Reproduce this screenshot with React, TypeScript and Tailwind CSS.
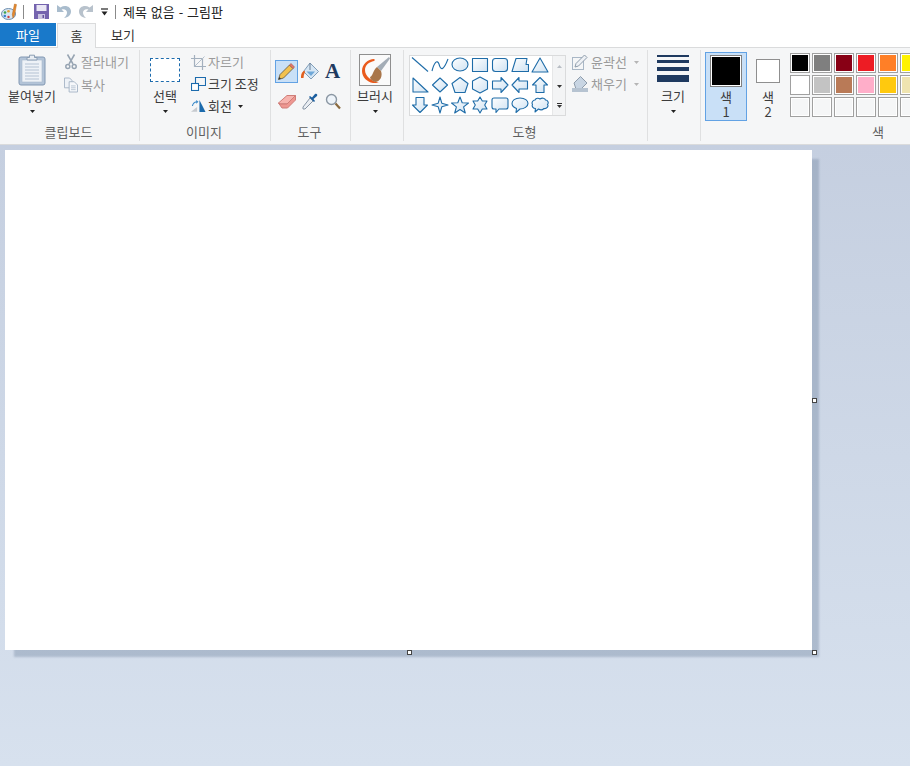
import type { ReactNode } from "react";

const FONT = "font-['Noto_Sans_CJK_KR','Noto_Sans',sans-serif]";

function Caret({ color = "#222" }: { color?: string }) {
    return (
        <svg width="5" height="3" viewBox="0 0 5 3">
            <path d="M0 0H5L2.500 3Z" fill={color} />
        </svg>
    );
}

function PaintLogo() {
    return (
        <svg width="17" height="18" viewBox="0 0 17 18">
            <ellipse cx="7.500" cy="11" rx="7" ry="5.500" fill="#d8e6f2" stroke="#6f8fb0" />
            <circle cx="4" cy="9.500" r="1.300" fill="#3fa34d" />
            <circle cx="7.500" cy="8.200" r="1.300" fill="#e0a030" />
            <circle cx="3.800" cy="13" r="1.300" fill="#3a7fd0" />
            <circle cx="7.500" cy="14" r="1.200" fill="#d04040" />
            <path d="M13.500 1L15.500 1.600L13.500 12L12 15L11.300 11.500Z" fill="#e58a2e" stroke="#b4641c" strokeWidth=".5" />
        </svg>
    );
}

function SaveIcon() {
    return (
        <svg width="15" height="15" viewBox="0 0 15 15">
            <path d="M0 0H15V15H0Z" fill="#7463ae" />
            <path d="M2.500 1H12.500V7H2.500Z" fill="#e9e6f4" />
            <path d="M4 10H11V15H4Z" fill="#c9c3e0" />
            <path d="M8.500 11H10V14H8.500Z" fill="#6553a0" />
        </svg>
    );
}

function UndoIcon({ flip = false }: { flip?: boolean }) {
    return (
        <svg width="14" height="15" viewBox="0 0 14 15" className={flip ? "-scale-x-100" : ""}>
            <path d="M0 1V8H7L4.600 5.600C7 4.400 10 5.600 10 8.600C10 10.600 9 12.400 7 14C11 13.500 14 11 14 7.500C14 2.800 8.500 0.400 3.400 3.400L0 1Z" fill={flip ? "#b8c2cc" : "#a9bccd"} />
        </svg>
    );
}

function QuickMenu() {
    return (
        <svg width="7" height="8" viewBox="0 0 7 8">
            <path d="M0 1H7" stroke="#222" strokeWidth="1.200" />
            <path d="M0.500 3.500H6.500L3.500 7.500Z" fill="#222" />
        </svg>
    );
}

function PasteIcon() {
    return (
        <svg width="28" height="32" viewBox="0 0 28 32">
            <rect x="1" y="3" width="26" height="28" rx="2" fill="#b3c4d8" stroke="#8298b3" />
            <rect x="4" y="6" width="20" height="22" fill="#eef2f7" stroke="#a9b9cc" strokeWidth=".6" />
            <path d="M7 10H21M7 13H21M7 16H21M7 19H21M7 22H21M7 25H21" stroke="#b4c2d3" />
            <path d="M9 6V3.500H11.500V1.200H16.500V3.500H19V6Z" fill="#e8edf3" stroke="#8a9db3" />
        </svg>
    );
}

function CutIcon() {
    return (
        <svg width="12" height="16" viewBox="0 0 12 16" fill="none" stroke="#97a4b2" strokeWidth="1.500">
            <path d="M2.500 0.500L8 10M9.500 0.500L4 10" />
            <circle cx="2.800" cy="12.600" r="2" />
            <circle cx="9.200" cy="12.600" r="2" />
        </svg>
    );
}

function CopyIcon() {
    return (
        <svg width="15" height="16" viewBox="0 0 15 16">
            <path d="M0.500 0.500H6L8.500 3V11H0.500Z" fill="#eef2f7" stroke="#a5b4c5" />
            <path d="M5.500 4.500H11L14.500 8V15.500H5.500Z" fill="#f6f8fb" stroke="#a5b4c5" />
            <path d="M7.500 9H12.500M7.500 11H12.500M7.500 13H12.500" stroke="#b8c4d2" />
        </svg>
    );
}

function CropIcon() {
    return (
        <svg width="15" height="15" viewBox="0 0 15 15" fill="none">
            <path d="M3.500 0V11.500H15M0 3.500H11.500V15" stroke="#a3b0be" strokeWidth="1.200" />
            <path d="M3.500 11.500L13.500 1.500" stroke="#b4bfcb" />
        </svg>
    );
}

function ResizeIcon() {
    return (
        <svg width="15" height="14" viewBox="0 0 15 14" fill="none" stroke="#1c6bad" strokeWidth="1.100">
            <rect x="0.500" y="6.500" width="7" height="7" fill="#fff" />
            <path d="M4.500 6.500V0.500H14.500V8.500H7.500" />
        </svg>
    );
}

function RotateIcon() {
    return (
        <svg width="16" height="14" viewBox="0 0 16 14">
            <path d="M0 13L6.500 8V13Z" fill="#c6cacf" />
            <path d="M9 0.500L15.500 13.500H9Z" fill="#1c6bad" />
            <path d="M1.500 7C2 4.500 3.500 3 6 2.500" stroke="#3b8ac8" strokeWidth="1.200" fill="none" />
            <path d="M5.500 0.500L8 2.500L5.500 4.500Z" fill="#3b8ac8" />
        </svg>
    );
}

function PencilIcon() {
    return (
        <svg width="17" height="17" viewBox="0 0 17 17">
            <path d="M0.500 16.500L2 11.500L11.500 2L15 5.500L5.500 15Z" fill="#f2c14e" stroke="#5b5340" strokeWidth=".8" />
            <path d="M0.500 16.500L1.200 14L3 15.800Z" fill="#333" />
            <path d="M11.500 2L13 0.500L16.500 4L15 5.500Z" fill="#e8786b" stroke="#a04a42" strokeWidth=".6" />
        </svg>
    );
}

function FillIcon() {
    return (
        <svg width="18" height="19" viewBox="0 0 18 19">
            <path d="M9 1L17.500 9.500L10 17L2.500 9.500Z" fill="#d6e6f4" stroke="#7f9db8" />
            <path d="M5.500 9.500H14L10 14Z" fill="#6fa8d8" />
            <path d="M9 1V8" stroke="#6b7f94" />
            <path d="M0 16C-0.200 12 1 10 3.500 8.500L4 10C3 12 2.500 14 2.500 16Z" fill="#e2601f" />
        </svg>
    );
}

function EraserIcon() {
    return (
        <svg width="18" height="14" viewBox="0 0 18 14">
            <path d="M0.500 8L9 0.500H17.500L9 9H2Z" fill="#f6b3ae" stroke="#cf7d78" />
            <path d="M0.500 8L4 13H9.500L17.500 5V0.500L9 9H2Z" fill="#ee9791" stroke="#cf7d78" />
        </svg>
    );
}

function PickerIcon() {
    return (
        <svg width="16" height="17" viewBox="0 0 16 17">
            <path d="M8 5L11 8L3 16H1V14Z" fill="#e9edf2" stroke="#8795a5" />
            <path d="M7 4L12 9L13 8L11.500 6L15 3C16 1.500 14.500 0 13 1L10 4.500L8 3Z" fill="#1c5f9f" />
        </svg>
    );
}

function MagnifierIcon() {
    return (
        <svg width="16" height="17" viewBox="0 0 16 17" fill="none">
            <circle cx="6.500" cy="6.500" r="5" fill="#eef4fa" stroke="#8b97a3" strokeWidth="1.400" />
            <path d="M10.500 10.500L15 15.500" stroke="#8a6a3f" strokeWidth="2.200" />
        </svg>
    );
}

function BrushIcon() {
    return (
        <svg width="32" height="32" viewBox="0 0 32 32">
            <rect x="0.500" y="0.500" width="31" height="31" fill="#fafafa" stroke="#8f8f8f" />
            <path d="M15 5C9 5 3 10 3 17C3 23 8 28 14 29L20 29C12 27 6 22 6 16C6 11 10 8 15 7C16 6.500 16 5.500 15 5Z" fill="#ea5a1c" />
            <path d="M30 3L31 4.500L22 17L18 13Z" fill="#a4adb6" />
            <path d="M18 13L22 17C24 22 21 28 16 28C13 27 11 25 11 23C14 22 14 16 18 13Z" fill="#a9764a" />
        </svg>
    );
}

const SHAPES: ReactNode[] = [
    <path d="M1 1.500L17 15.500" />,
    <path d="M1 15C3 7 6 3 8 8C9.500 14 12 16 17 3" fill="none" />,
    <ellipse cx="9" cy="8.500" rx="8" ry="6.500" />,
    <rect x="1.500" y="2.500" width="15" height="13" />,
    <rect x="1.500" y="2.500" width="15" height="13" rx="3" />,
    <path d="M5 2.500H16L15 8.500H17.500V15.500H1Z" />,
    <path d="M9 2L17 16H1Z" />,
    <path d="M2 2L17 16H2Z" />,
    <path d="M9 2L16.500 9L9 16L1.500 9Z" />,
    <path d="M9 1.500L17 7.500L14 16.500H4L1 7.500Z" />,
    <path d="M9 1L16.500 5V13L9 17L1.500 13V5Z" />,
    <path d="M1.500 5H10V1.500L17 9L10 16.500V13H1.500Z" />,
    <path d="M16.500 5H8V1.500L1 9L8 16.500V13H16.500Z" />,
    <path d="M9 1.500L16.500 9H13V16.500H5V9H1.500Z" />,
    <path d="M5 1.500H13V9H16.500L9 16.500L1.500 9H5Z" />,
    <path d="M9 1L10.800 7.200L17 9L10.800 10.800L9 17L7.200 10.800L1 9L7.200 7.200Z" />,
    <path d="M9 1L11.200 6.800L17.500 7L12.600 10.900L14.300 17L9 13.500L3.700 17L5.400 10.900L0.500 7L6.800 6.800Z" />,
    <path d="M9 1L11.300 5H16L13.700 9L16 13H11.300L9 17L6.700 13H2L4.300 9L2 5H6.700Z" />,
    <path d="M3 2H15Q17 2 17 4V11Q17 13 15 13H8L5 16.500V13H3Q1 13 1 11V4Q1 2 3 2Z" />,
    <path d="M9 2C14 2 17 4.500 17 7.500C17 10.500 13 13 9 13L5 16.500L5.500 12.500C3 11.500 1 10 1 7.500C1 4.500 4 2 9 2Z" />,
    <path d="M4 4C5 1.500 8 2 9 3C11 1.500 14 2 14.500 4C17 4 18 7 16.500 8.500C18 10.500 15.500 13 13 12.500C11.500 14 9 14 7.500 13L4 16L4.500 12.500C2 12.500 0.500 10 1.500 8.500C0.200 6.500 2 4 4 4Z" />,
];

function ShapeGallery() {
    return (
        <div className="w-[157px] h-[61px] border border-[#dadbdc] flex bg-white">
            <div className="w-[142px] grid grid-cols-[repeat(7,20px)] content-start">
                {SHAPES.map((shape, i) => (
                    <div key={i} className="w-[20px] h-[20px] flex justify-center items-start">
                        <svg width="18" height="18" viewBox="0 0 18 18" fill={`url(#shapeFill${i})`} stroke="#1e6ca8" strokeWidth="1.100" strokeLinejoin="round">
                            <defs>
                                <linearGradient id={`shapeFill${i}`} x1="0" y1="0" x2="1" y2="1">
                                    <stop offset="0" stopColor="#ffffff" />
                                    <stop offset="1" stopColor="#cfe2f2" />
                                </linearGradient>
                            </defs>
                            {shape}
                        </svg>
                    </div>
                ))}
            </div>
            <div className="flex-1 flex flex-col items-center bg-[#f3f4f5] border-l border-[#e6e7e8]">
                <div className="h-[20px] flex items-center">
                    <svg width="5" height="3" viewBox="0 0 5 3"><path d="M0 3H5L2.500 0Z" fill="#b8bdc4" /></svg>
                </div>
                <div className="h-[20px] flex items-center">
                    <Caret color="#333" />
                </div>
                <div className="h-[19px] flex flex-col items-center justify-center gap-[1px]">
                    <div className="w-[5px] h-[1px] bg-[#333]" />
                    <Caret color="#333" />
                </div>
            </div>
        </div>
    );
}

function OutlineIcon() {
    return (
        <svg width="16" height="16" viewBox="0 0 16 16" fill="none">
            <rect x="0.500" y="3.500" width="11" height="12" stroke="#a9b7c6" />
            <path d="M3 13L4 9.500L12.500 1L15 3.500L6.500 12Z" fill="#eef1f5" stroke="#8e9cab" />
        </svg>
    );
}

function FillShapeIcon() {
    return (
        <svg width="16" height="16" viewBox="0 0 16 16">
            <path d="M8.500 0.500L15 7L9 13H4L2 7Z" fill="#c8d5e3" stroke="#8e9cab" />
            <path d="M0 12H16V16H0Z" fill="#b6c3d1" />
        </svg>
    );
}

function LargeButton({ icon, label, width = "w-[48px]" }: { icon: ReactNode; label: string; width?: string }) {
    return (
        <div className={`${width} flex flex-col items-center text-[#3c3c3c]`}>
            <div className="h-[38px] flex items-center justify-center pt-[1px]">{icon}</div>
            <div className="h-[15px] leading-[15px] whitespace-nowrap">{label}</div>
            <div className="h-[17px] flex items-center">
                <Caret />
            </div>
        </div>
    );
}

function SmallButton({ icon, label, disabled = false, caret = false, gap = "gap-[2px]", iconWidth = "w-[15px]" }: {
    icon: ReactNode;
    label: string;
    disabled?: boolean;
    caret?: boolean;
    gap?: string;
    iconWidth?: string;
}) {
    return (
        <div className={`h-[22px] flex items-center ${gap} whitespace-nowrap ${disabled ? "text-[#9b9b9b]" : "text-[#3c3c3c]"}`}>
            <div className={`${iconWidth} flex justify-center`}>{icon}</div>
            <span>{label}</span>
            {caret && (
                <span className="ml-[4px] flex items-center">
                    <Caret color={disabled ? "#b5b5b5" : "#222"} />
                </span>
            )}
        </div>
    );
}

function Group({ width, label, divider = true, children }: { width: string; label: string; divider?: boolean; children: ReactNode }) {
    return (
        <div className={`${width} shrink-0 h-[91px] mt-[2px] flex flex-col ${divider ? "border-r border-[#dfe0e1]" : ""}`}>
            <div className="h-[73px] flex">{children}</div>
            <div className="h-[18px] leading-[18px] text-center text-[#5f5f5f] pr-[2px]">{label}</div>
        </div>
    );
}

const SWATCHES = [
    ["#000000", "#7f7f7f", "#880015", "#ed1c24", "#ff7f27", "#fff200"],
    ["#ffffff", "#c3c3c3", "#b97a57", "#ffaec9", "#ffc90e", "#efe4b0"],
    ["#f5f6f7", "#f5f6f7", "#f5f6f7", "#f5f6f7", "#f5f6f7", "#f5f6f7"],
];

function Palette() {
    return (
        <div className="flex flex-col gap-[2px] pt-[3px] ml-[1px]">
            {SWATCHES.map((row, r) => (
                <div key={r} className="flex gap-[2px]">
                    {row.map((color, c) => (
                        <div key={c} className="w-[20px] h-[20px] border border-[#a0a0a0] bg-white p-[1px]">
                            <div className="w-full h-full" style={{ backgroundColor: color }} />
                        </div>
                    ))}
                </div>
            ))}
        </div>
    );
}

export default function App() {
    return (
        <div className={`w-[910px] h-[766px] overflow-hidden flex flex-col bg-white text-[13px] ${FONT}`}>
            {/* Title bar */}
            <div className="h-[23px] flex items-center pl-[1px] shrink-0">
                <PaintLogo />
                <div className="w-[1px] h-[14px] bg-[#8a8a8a] ml-[5px] mr-[10px]" />
                <SaveIcon />
                <div className="ml-[8px]"><UndoIcon /></div>
                <div className="ml-[8px]"><UndoIcon flip /></div>
                <div className="ml-[8px]"><QuickMenu /></div>
                <div className="w-[1px] h-[14px] bg-[#8a8a8a] ml-[7px] mr-[7px]" />
                <span className="text-[#222] [word-spacing:1px]">제목 없음 - 그림판</span>
            </div>

            {/* Tabs */}
            <div className="h-[24px] flex shrink-0 relative z-10">
                <div className="w-[56px] h-[23px] bg-[#1979ca] text-white flex items-center justify-center">파일</div>
                <div className="w-[39px] h-[25px] ml-[1px] bg-[#f5f6f7] border border-b-0 border-[#dadbdc] flex items-center justify-center text-[#333]">홈</div>
                <div className="w-[38px] h-[23px] ml-[15px] flex items-center text-[#333]">보기</div>
            </div>

            {/* Ribbon */}
            <div className="h-[98px] shrink-0 flex bg-[#f5f6f7] border-y border-[#dadbdc]">
                <Group width="w-[140px]" label="클립보드">
                    <div className="ml-[8px]">
                        <LargeButton icon={<PasteIcon />} label="붙여넣기" />
                    </div>
                    <div className="ml-[8px] pt-[1px] flex flex-col gap-[1px]">
                        <SmallButton icon={<CutIcon />} label="잘라내기" disabled gap="gap-[3px]" iconWidth="w-[14px]" />
                        <SmallButton icon={<CopyIcon />} label="복사" disabled gap="gap-[3px]" iconWidth="w-[14px]" />
                    </div>
                </Group>

                <Group width="w-[131px]" label="이미지">
                    <div className="ml-[10px]">
                        <LargeButton
                            width="w-[30px]"
                            label="선택"
                            icon={<div className="w-[30px] h-[24px] border border-dashed border-[#1c6bad] bg-white" />}
                        />
                    </div>
                    <div className="ml-[11px] pt-[1px] flex flex-col">
                        <SmallButton icon={<CropIcon />} label="자르기" disabled />
                        <SmallButton icon={<ResizeIcon />} label="크기 조정" />
                        <SmallButton icon={<RotateIcon />} label="회전" caret />
                    </div>
                </Group>

                <Group width="w-[80px]" label="도구">
                    <div className="ml-[4px] pt-[10px] grid grid-cols-[23px_23px_23px] grid-rows-[23px_23px] gap-y-[7px]">
                        <div className="flex items-center justify-center bg-[#c9e0f7] border border-[#62a2e4]"><PencilIcon /></div>
                        <div className="flex items-center justify-center"><FillIcon /></div>
                        <div className="flex items-center justify-center">
                            <span className="font-['Liberation_Serif',serif] font-bold text-[21px] leading-none text-[#1f3a60]">A</span>
                        </div>
                        <div className="flex items-center justify-center"><EraserIcon /></div>
                        <div className="flex items-center justify-center"><PickerIcon /></div>
                        <div className="flex items-center justify-center"><MagnifierIcon /></div>
                    </div>
                </Group>

                <Group width="w-[53px]" label="">
                    <LargeButton icon={<BrushIcon />} label="브러시" />
                </Group>

                <Group width="w-[244px]" label="도형">
                    <div className="ml-[5px] pt-[5px]">
                        <ShapeGallery />
                    </div>
                    <div className="ml-[6px] pt-[1px] flex flex-col">
                        <SmallButton icon={<OutlineIcon />} label="윤곽선" disabled caret gap="gap-[3px]" iconWidth="w-[16px]" />
                        <SmallButton icon={<FillShapeIcon />} label="채우기" disabled caret gap="gap-[3px]" iconWidth="w-[16px]" />
                    </div>
                </Group>

                <Group width="w-[53px]" label="">
                    <LargeButton
                        width="w-[50px]"
                        label="크기"
                        icon={
                            <div className="w-[32px] flex flex-col mt-[-3px]">
                                <div className="h-[2px] bg-[#1f3a60]" />
                                <div className="h-[3px] mt-[3px] bg-[#1f3a60]" />
                                <div className="h-[4px] mt-[4px] bg-[#1f3a60]" />
                                <div className="h-[7px] mt-[4px] bg-[#1f3a60]" />
                            </div>
                        }
                    />
                </Group>

                <Group width="w-[356px]" label="색" divider={false}>
                    <div className="ml-[4px] mt-[2px] w-[42px] h-[69px] bg-[#c9e0f7] border border-[#62a2e4] flex flex-col items-center text-[#3c3c3c]">
                        <div className="h-[36px] pt-[2px]">
                            <div className="w-[32px] h-[32px] border border-[#7f7f7f] bg-white p-[1px]">
                                <div className="w-full h-full bg-black" />
                            </div>
                        </div>
                        <div className="h-[15px] leading-[15px]">색</div>
                        <div className="h-[15px] leading-[15px]">1</div>
                    </div>
                    <div className="mt-[2px] w-[42px] h-[69px] flex flex-col items-center text-[#3c3c3c]">
                        <div className="h-[37px] pt-[7px]">
                            <div className="w-[24px] h-[24px] border border-[#8f8f8f] bg-white" />
                        </div>
                        <div className="h-[15px] leading-[15px]">색</div>
                        <div className="h-[15px] leading-[15px]">2</div>
                    </div>
                    <Palette />
                </Group>
            </div>

            {/* Canvas area */}
            <div className="flex-1 pl-[5px] pt-[5px] bg-gradient-to-b from-[#c5cfe0] to-[#d7e1ee]">
                <div className="relative w-[807px] h-[500px] bg-white shadow-[8px_8px_2px_-1px_rgba(120,138,165,0.42)]">
                    <div className="absolute left-[807px] top-[248px] w-[5px] h-[5px] bg-white border border-[#444]" />
                    <div className="absolute left-[402px] top-[500px] w-[5px] h-[5px] bg-white border border-[#444]" />
                    <div className="absolute left-[807px] top-[500px] w-[5px] h-[5px] bg-white border border-[#444]" />
                </div>
            </div>
        </div>
    );
}
